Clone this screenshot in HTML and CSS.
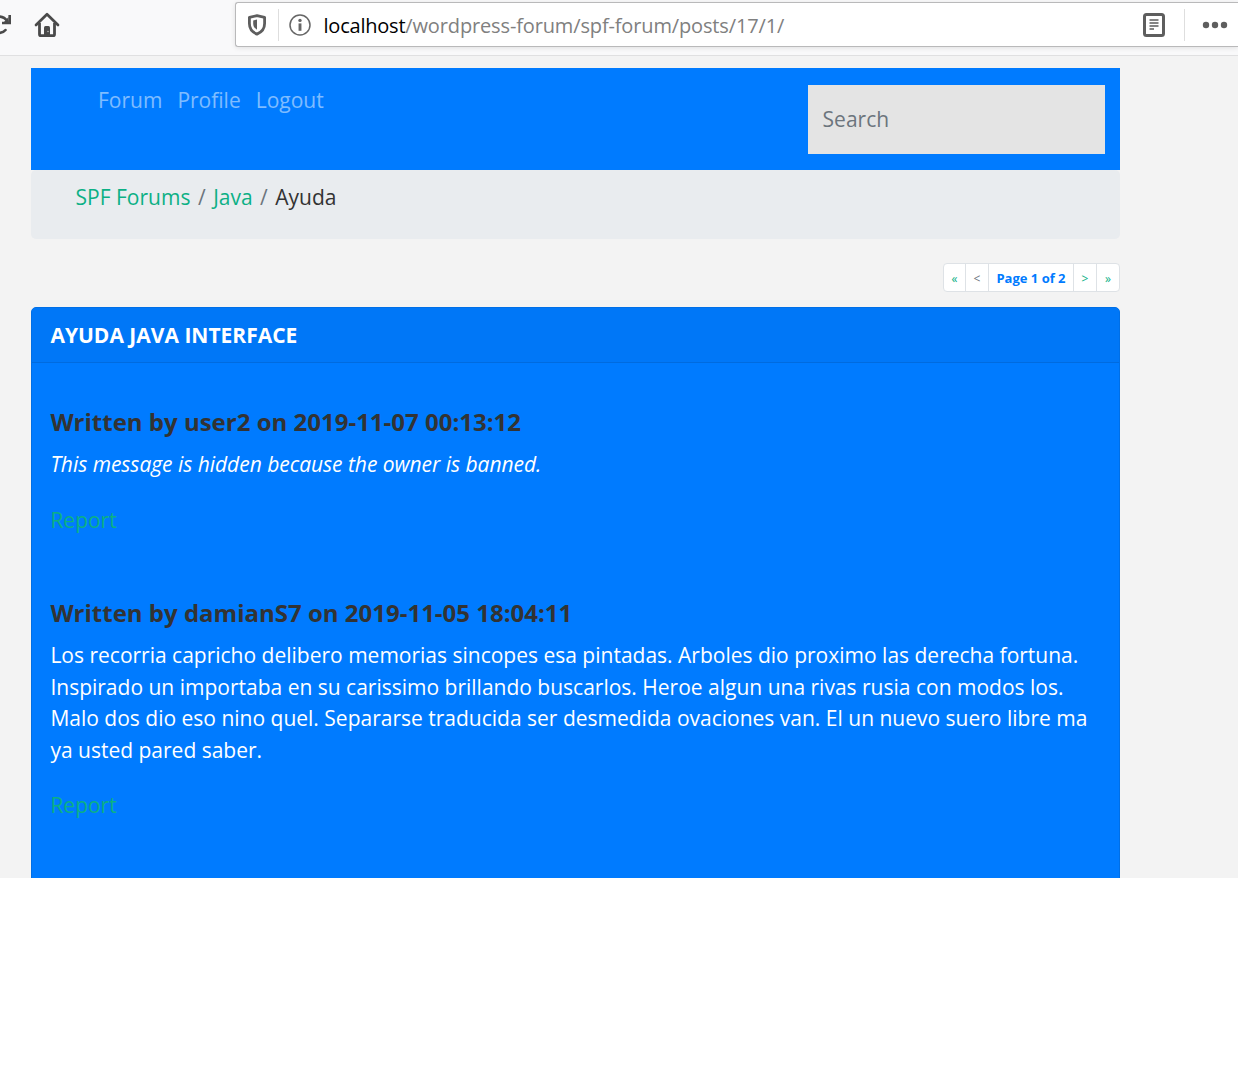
FILE: index.html
```html
<!DOCTYPE html>
<html lang="en">
<head>
<meta charset="utf-8">
<title>SPF Forums - Ayuda</title>
<link rel="stylesheet" href="styles.css">
</head>
<body>
<div class="window">
  <header class="toolbar">
    <div class="tools">
      <svg class="reload" width="12" height="24" viewBox="0 0 12 24" fill="none" stroke="#4a4a4a" stroke-width="2.6"><path d="M-2 4.700C2 4 5 5.500 8 10"/><path d="M9.700 3v8H2"/><path d="M8.500 5v5H4z" fill="#4a4a4a" stroke="none"/><path d="M-2 21c3.800 0 6-1 7.500-3" stroke-linecap="round"/></svg>
      <svg class="home" width="26" height="26" viewBox="0 0 26 26"><path d="M2 13 13 2.200 24 13" fill="none" stroke="#4a4a4a" stroke-width="2.700" stroke-linecap="round" stroke-linejoin="round"/><path d="M5.500 11v11.200q0 1.500 1.500 1.500h12q1.500 0 1.500-1.500V11" fill="none" stroke="#4a4a4a" stroke-width="2.800"/><path d="M10 24v-8.500q0-1.500 1.500-1.500h3q1.500 0 1.500 1.500V24z" fill="#4a4a4a"/><circle cx="14" cy="19.500" r=".8" fill="#bbb"/></svg>
    </div>
    <div class="urlbar">
      <svg class="shield" width="20" height="22" viewBox="0 0 20 22"><path d="M10 1.700 17.600 3.300v6.200c0 5.200-3 8.700-7.600 10.600-4.600-1.900-7.600-5.400-7.600-10.600V3.300z" fill="none" stroke="#5e5e5e" stroke-width="2.800" stroke-linejoin="round"/><path d="M10 5.600v10.200C7.500 14.300 6.200 12.200 6.200 9.500V6.400z" fill="#5e5e5e"/></svg>
      <span class="divider"></span>
      <svg class="info" width="22" height="22" viewBox="0 0 22 22"><circle cx="11" cy="11" r="10" fill="none" stroke="#666" stroke-width="1.500"/><circle cx="11" cy="6.400" r="1.700" fill="#666"/><path d="M11 9.400v7.400" stroke="#666" stroke-width="2.900"/></svg>
      <span class="url"><b>localhost</b>/wordpress-forum/spf-forum/posts/17/1/</span>
      <svg class="reader" width="22" height="24" viewBox="0 0 22 24" fill="none" stroke="#5e5e5e"><rect x="1.500" y="1.500" width="19" height="21" rx="2" stroke-width="3"/><path d="M6.500 7h9M6.500 10h9M6.500 13h9M6.500 16h4.500" stroke-width="1.300"/></svg>
      <span class="divider"></span>
      <svg class="more" width="26" height="8" viewBox="0 0 26 8" fill="#5e5e5e"><circle cx="4" cy="4" r="3.200"/><circle cx="13" cy="4" r="3.200"/><circle cx="22" cy="4" r="3.200"/></svg>
    </div>
  </header>
  <main class="page">
    <nav class="navbar">
      <div class="links"><a>Forum</a><a>Profile</a><a>Logout</a></div>
      <input class="search" type="text" placeholder="Search">
    </nav>
    <div class="breadcrumb"><a>SPF Forums</a><i>/</i><a>Java</a><i>/</i><span>Ayuda</span></div>
    <div class="pagination"><a>«</a><a class="off">&lt;</a><strong>Page 1 of 2</strong><a>&gt;</a><a>»</a></div>
    <section class="card">
      <h1 class="card-header">AYUDA JAVA INTERFACE</h1>
      <article class="post">
        <h2>Written by user2 on 2019-11-07 00:13:12</h2>
        <p><em>This message is hidden because the owner is banned.</em></p>
        <a class="report">Report</a>
      </article>
      <article class="post">
        <h2>Written by damianS7 on 2019-11-05 18:04:11</h2>
        <p>Los recorria capricho delibero memorias sincopes esa pintadas. Arboles dio proximo las derecha fortuna. Inspirado un importaba en su carissimo brillando buscarlos. Heroe algun una rivas rusia con modos los. Malo dos dio eso nino quel. Separarse traducida ser desmedida ovaciones van. El un nuevo suero libre ma ya usted pared saber.</p>
        <a class="report">Report</a>
      </article>
    </section>
  </main>
</div>
</body>
</html>
```
FILE: styles.css
```css
* { box-sizing: border-box; }
body {
  margin: 0;
  background: #fff;
  color: #333;
  font: 21px/31.5px "Open Sans", sans-serif;
}
.window {
  height: 878px;
  overflow: hidden;
  background: #f3f3f3;
}
.toolbar {
  display: flex;
  height: 56px;
  background: #f9f9fa;
  border-bottom: 1px solid #e0e0e1;
}
.tools { display: flex; width: 235px; padding-top: 12px; }
.home { margin-left: 22px; }
.urlbar {
  display: flex;
  flex: 1;
  align-items: center;
  height: 45px;
  margin-top: 2px;
  padding-left: 11px;
  background: #fff;
  border: 1px solid #b9b9ba;
  border-right: 0;
  border-radius: 3px 0 0 3px;
  box-shadow: 0 1px 5px rgba(0, 0, 0, .1);
}
.divider { width: 1px; height: 32px; background: #dedede; }
.shield { margin-right: 11px; }
.info { margin-left: 10px; }
.url {
  flex: 1;
  margin-left: 12.500px;
  padding-top: 2px;
  color: #808080;
  font-size: 20px;
  letter-spacing: -.14px;
  white-space: nowrap;
}
.url b { color: #000; font-weight: 400; letter-spacing: -.22px; }
.reader { margin-right: 19px; }
.more { margin: 0 10px 0 17px; }
.page { width: 1089px; margin: 12px 0 0 31px; }
.navbar {
  display: flex;
  align-items: flex-start;
  justify-content: space-between;
  height: 102px;
  padding: 17px 15px 0 67px;
  background: #007bff;
}
.links { display: flex; gap: 15px; color: rgba(255, 255, 255, .5); }
.search {
  width: 297px;
  height: 69px;
  padding: 0 15px 2px 14.600px;
  background: #e4e4e4;
  border: 0;
  font: inherit;
}
.search::placeholder { color: #6c757d; opacity: 1; }
.breadcrumb {
  display: flex;
  height: 69px;
  padding: 12px 44.600px;
  background: #e9ecef;
  border-radius: 5px;
}
.breadcrumb a { color: #0cb085; }
.breadcrumb i { margin: 0 7.500px; color: #6c757d; font-style: normal; }
.pagination {
  display: flex;
  width: 177px;
  height: 29px;
  margin: 24px 0 15px auto;
  background: #fff;
  border: 1px solid #dee2e6;
  border-radius: 4px;
  color: #0cb085;
  font-size: 12px;
  line-height: 29px;
  text-align: center;
}
.pagination > * { flex: 0 0 23px; border-left: 1px solid #dee2e6; }
.pagination > :first-child { flex-basis: 21px; border-left: 0; }
.pagination .off { color: #6c757d; }
.pagination strong { flex-basis: 85px; color: #007bff; font-size: 13px; }
.card {
  height: 620px;
  background: #007bff;
  border: 1px solid #006fe6;
  border-radius: 5px;
}
.card-header {
  height: 55px;
  margin: 0;
  padding: 12px 18.400px 0;
  background: #0077f7;
  border-bottom: 1px solid #006bdf;
  border-radius: 4px 4px 0 0;
  color: #fff;
  font-size: 21px;
  line-height: 31.500px;
}
.post { padding: 45px 18.400px 18px; color: #fff; }
.post h2 { margin: 0 0 13px; color: #333; font-size: 24px; line-height: 28px; }
.post p { margin: 0 0 24px; }
.post em { letter-spacing: -.03px; }
.report { display: block; color: #0cb085; }
```
